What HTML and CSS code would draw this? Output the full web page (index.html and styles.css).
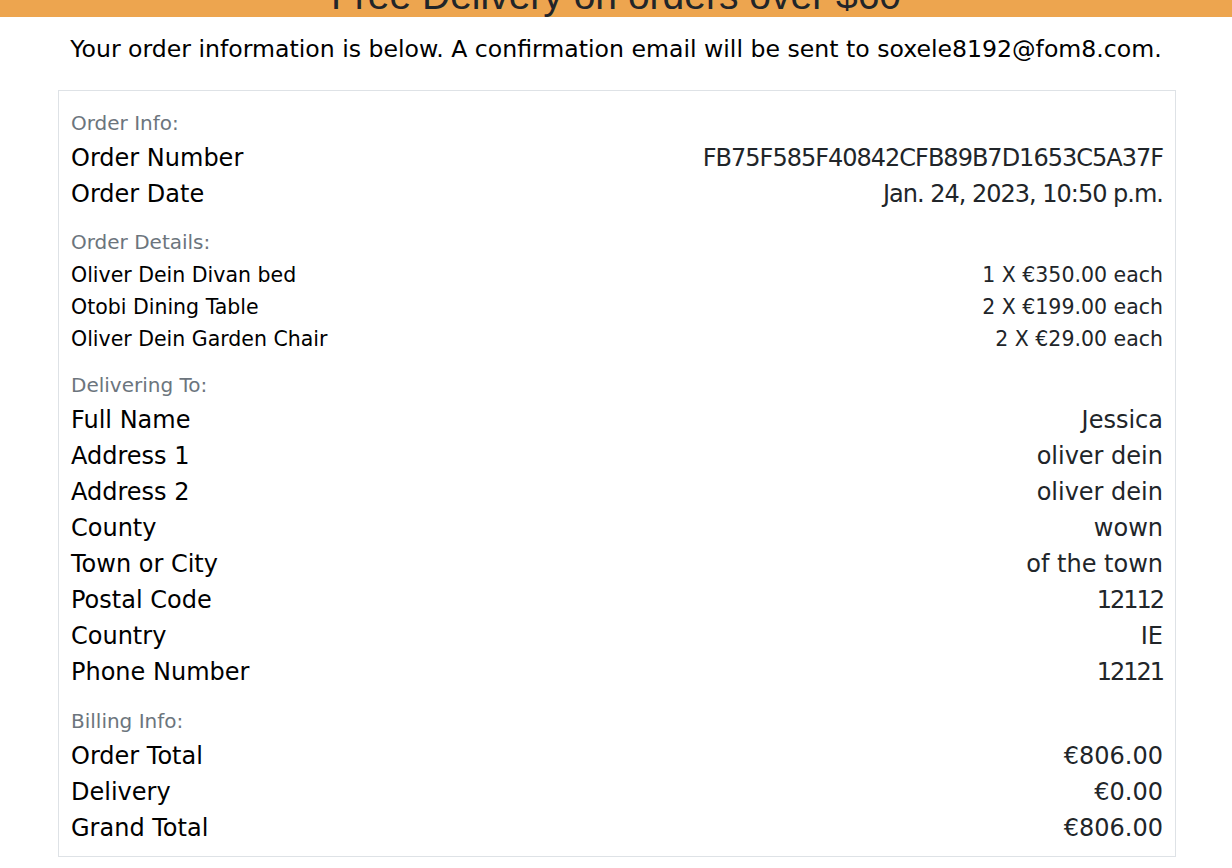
FILE: index.html
```html
<!DOCTYPE html>
<html lang="en">
<head>
<meta charset="utf-8">
<title>Order Confirmation</title>
<link rel="stylesheet" href="styles.css">
</head>
<body>
<div class="banner"><span class="banner-text">Free Delivery on orders over $60</span></div>
<p class="intro">Your order information is below. A confirmation email will be sent to soxele8192@fom8.com.</p>
<div class="order-box">
  <section class="section">
    <div class="section-label">Order Info:</div>
    <div class="row"><span class="key">Order Number</span><span class="val tight">FB75F585F40842CFB89B7D1653C5A37F</span></div>
    <div class="row"><span class="key">Order Date</span><span class="val tight">Jan. 24, 2023, 10:50 p.m.</span></div>
  </section>
  <section class="section">
    <div class="section-label">Order Details:</div>
    <div class="row row-sm"><span class="key">Oliver Dein Divan bed</span><span class="val">1 X €350.00 each</span></div>
    <div class="row row-sm"><span class="key">Otobi Dining Table</span><span class="val">2 X €199.00 each</span></div>
    <div class="row row-sm"><span class="key">Oliver Dein Garden Chair</span><span class="val">2 X €29.00 each</span></div>
  </section>
  <section class="section">
    <div class="section-label">Delivering To:</div>
    <div class="row"><span class="key">Full Name</span><span class="val">Jessica</span></div>
    <div class="row"><span class="key">Address 1</span><span class="val">oliver dein</span></div>
    <div class="row"><span class="key">Address 2</span><span class="val">oliver dein</span></div>
    <div class="row"><span class="key">County</span><span class="val">wown</span></div>
    <div class="row"><span class="key">Town or City</span><span class="val">of the town</span></div>
    <div class="row"><span class="key">Postal Code</span><span class="val num">12112</span></div>
    <div class="row"><span class="key">Country</span><span class="val">IE</span></div>
    <div class="row"><span class="key">Phone Number</span><span class="val num">12121</span></div>
  </section>
  <section class="section section-billing">
    <div class="section-label">Billing Info:</div>
    <div class="row"><span class="key">Order Total</span><span class="val">€806.00</span></div>
    <div class="row"><span class="key">Delivery</span><span class="val">€0.00</span></div>
    <div class="row"><span class="key">Grand Total</span><span class="val">€806.00</span></div>
  </section>
</div>
</body>
</html>
```

FILE: styles.css
```css
html, body {
  margin: 0;
  padding: 0;
  background: #ffffff;
}

body {
  font-family: "DejaVu Sans", sans-serif;
  color: #000000;
}

.banner {
  height: 17px;
  overflow: hidden;
  background: #eda54f;
  display: flex;
  justify-content: center;
  align-items: flex-end;
}

.banner-text {
  font-family: "Liberation Sans", Arial, sans-serif;
  font-size: 39px;
  line-height: 1;
  color: #222529;
  white-space: nowrap;
  margin-bottom: 2px;
}

.intro {
  margin: 14px 0 23px;
  text-align: center;
  font-size: 23.6px;
  line-height: 36px;
}

.order-box {
  margin: 0 56px 0 58px;
  border: 1px solid #dee2e6;
  padding: 16px 12px 10px;
}

.section + .section {
  margin-top: 14px;
}

.section + .section-billing {
  margin-top: 15px;
}

.section-label {
  font-size: 20px;
  line-height: 33px;
  color: #6c757d;
}

.row {
  display: flex;
  justify-content: space-between;
  font-size: 24px;
  line-height: 36px;
}

.row-sm {
  font-size: 20.5px;
  line-height: 32px;
}

.key {
  color: #000000;
}

.val {
  color: #212529;
  text-align: right;
}

.tight {
  letter-spacing: -1px;
}

.num {
  letter-spacing: -2px;
}
```
